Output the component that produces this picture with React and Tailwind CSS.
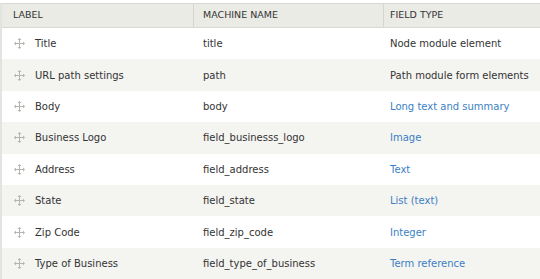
import React from 'react'

const ROWS = [
  { label: 'Title', machine: 'title', type: 'Node module element', link: false },
  { label: 'URL path settings', machine: 'path', type: 'Path module form elements', link: false },
  { label: 'Body', machine: 'body', type: 'Long text and summary', link: true },
  { label: 'Business Logo', machine: 'field_businesss_logo', type: 'Image', link: true },
  { label: 'Address', machine: 'field_address', type: 'Text', link: true },
  { label: 'State', machine: 'field_state', type: 'List (text)', link: true },
  { label: 'Zip Code', machine: 'field_zip_code', type: 'Integer', link: true },
  { label: 'Type of Business', machine: 'field_type_of_business', type: 'Term reference', link: true },
]

function DragHandle() {
  return (
    <svg width="11" height="11" viewBox="0 0 11 11" className="shrink-0">
      <g fill="none" stroke="#b5b5b0" strokeWidth="1">
        <path d="M5.5 1v9M1 5.5h9" />
      </g>
      <g fill="#b5b5b0">
        <path d="M5.5 0L3.5 2h4z" />
        <path d="M5.5 11L3.5 9h4z" />
        <path d="M0 5.5L2 3.5v4z" />
        <path d="M11 5.5L9 3.5v4z" />
      </g>
    </svg>
  )
}

export default function App() {
  return (
    <div className="w-[540px] h-[279px] overflow-hidden bg-white pt-[3px] font-['DejaVu_Sans',sans-serif] text-[10px] text-[#333]">
      <div className="border-l-2 border-[#e3e3df]">
        <div className="grid grid-cols-[191px_190px_1fr] h-[25px] bg-[#ebebe6] border-y border-[#d9d9d4] text-[9.5px] text-[#333] items-stretch">
          <div className="flex items-center pl-[11px]">LABEL</div>
          <div className="flex items-center pl-[9px] border-l border-[#d6d6d1]">MACHINE NAME</div>
          <div className="flex items-center pl-[6px] border-l border-[#d6d6d1]">FIELD TYPE</div>
        </div>
        {ROWS.map((r, i) => (
          <div
            key={r.machine}
            className={`grid grid-cols-[191px_190px_1fr] h-[31.4px] items-center ${i % 2 === 1 ? 'bg-[#f4f4f1]' : 'bg-white'}`}
          >
            <div className="flex items-center gap-[10px] pl-[12px]">
              <DragHandle />
              <span>{r.label}</span>
            </div>
            <div className="pl-[10px]">{r.machine}</div>
            <div className={`pl-[7px] whitespace-nowrap ${r.link ? 'text-[#3b7fc4]' : ''}`}>{r.type}</div>
          </div>
        ))}
      </div>
    </div>
  )
}
